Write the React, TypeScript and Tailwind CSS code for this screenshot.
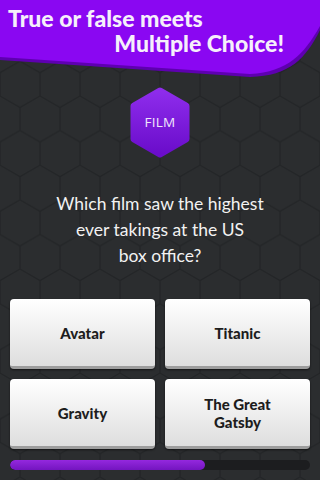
import React from "react";

const ANSWERS = ["Avatar", "Titanic", "Gravity", "The Great Gatsby"];

function HexBackground() {
  return (
    <svg className="absolute inset-0 h-full w-full" aria-hidden>
      <defs>
        <pattern id="hexes" width="40" height="69.28" patternUnits="userSpaceOnUse" x="0" y="-8">
          <path
            d="M20 0 L40 11.55 L40 34.64 L20 46.19 L0 34.64 L0 11.55 Z M20 46.19 L20 69.28"
            fill="none"
            stroke="#232527"
            strokeWidth="1.4"
          />
        </pattern>
      </defs>
      <rect width="100%" height="100%" fill="url(#hexes)" />
    </svg>
  );
}

function HeaderShape() {
  return (
    <svg className="absolute inset-0 h-[80px] w-[320px]" viewBox="0 0 320 80" aria-hidden>
      <path d="M0 0 H320 V30 C306 58 290 76 250 77 L0 60 Z" fill="#5e00b0" />
      <path d="M0 0 H320 V26 C304 54 288 72 250 74 L0 57 Z" fill="#8a07f2" />
    </svg>
  );
}

function CategoryBadge({ label }: { label: string }) {
  return (
    <div className="relative flex h-[71px] w-[60px] items-center justify-center">
      <svg className="absolute inset-0" viewBox="0 0 60 71" aria-hidden>
        <defs>
          <linearGradient id="badge" x1="0" y1="0" x2="0" y2="1">
            <stop offset="0" stopColor="#8e2cec" />
            <stop offset="1" stopColor="#6a0dca" />
          </linearGradient>
        </defs>
        <path
          d="M30 4 L56 19 L56 52 L30 67 L4 52 L4 19 Z"
          fill="url(#badge)"
          stroke="url(#badge)"
          strokeWidth="7"
          strokeLinejoin="round"
        />
      </svg>
      <span className="relative font-['Open_Sans',sans-serif] text-[13.5px] tracking-[0.02em] text-[#f1e6fb]">
        {label}
      </span>
    </div>
  );
}

function AnswerButton({ text }: { text: string }) {
  return (
    <button className="flex h-[70px] items-center justify-center rounded-[4px] border-b-[3px] border-[#9d9d9d] bg-gradient-to-b from-[#ffffff] to-[#dedede] px-3 text-center text-[15px] font-black leading-[18px] text-[#1d1d1d] shadow-[0_1px_2px_rgba(0,0,0,0.6)]">
      {text === "The Great Gatsby" ? (
        <span>
          The Great
          <br />
          Gatsby
        </span>
      ) : (
        text
      )}
    </button>
  );
}

export default function App() {
  const progress = 0.65;

  return (
    <div className="relative h-[480px] w-[320px] overflow-hidden bg-[#2b2d2f] font-['Lato',sans-serif]">
      <HexBackground />
      <div className="relative flex h-full flex-col">
        <header className="relative h-[80px]">
          <HeaderShape />
          <div className="relative px-[8px] pt-[6px] text-[23px] font-black leading-[25px] text-[#f6effb]">
            <p>True or false meets</p>
            <p className="pr-[28px] text-right">Multiple Choice!</p>
          </div>
        </header>

        <div className="mt-[7px] flex justify-center">
          <CategoryBadge label="FILM" />
        </div>

        <p className="mt-[33px] text-center text-[17.5px] leading-[26px] text-[#f2f2f2]">
          Which film saw the highest
          <br />
          ever takings at the US
          <br />
          box office?
        </p>

        <div className="mt-[30px] grid grid-cols-2 gap-x-[10px] gap-y-[10px] px-[10px]">
          {ANSWERS.map((a) => (
            <AnswerButton key={a} text={a} />
          ))}
        </div>

        <div className="mx-[10px] mt-[11px] h-[10px] overflow-hidden rounded-full bg-[#1c1d1f]">
          <div
            className="h-full rounded-full bg-gradient-to-b from-[#9428de] to-[#7414c0]"
            style={{ width: `${progress * 100}%` }}
          />
        </div>
      </div>
    </div>
  );
}
